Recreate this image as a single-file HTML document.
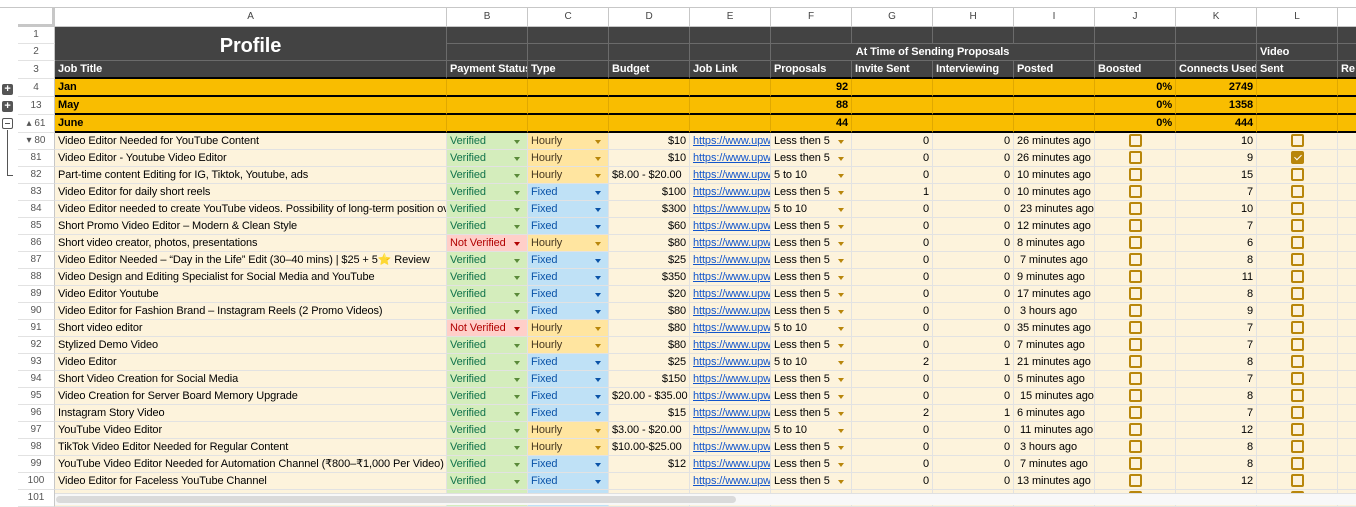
<!DOCTYPE html>
<html><head><meta charset="utf-8">
<style>
*{box-sizing:border-box}
body{margin:0;width:1356px;height:505px;overflow:hidden;background:#fff;font-family:"Liberation Sans",Arial,sans-serif;font-size:11px;color:#000;position:relative;letter-spacing:-0.1px}
.top{position:absolute;left:0;top:0;width:1356px;height:8px;border-bottom:1px solid #c7c7c7;background:#fff}
.gut{position:absolute;left:0;top:8px;width:18px;height:497px;background:#fff}
table{position:absolute;left:18px;top:8px;width:1350px;border-collapse:separate;border-spacing:0;table-layout:fixed}
td{height:17px;padding:0 3px;border-right:1px solid #e2e2e2;border-bottom:1px solid #e2e2e2;white-space:nowrap;overflow:hidden;line-height:16px;background:#fdf3dc;position:relative}
tr.ch td{height:19px;background:#fff;color:#444;font-size:10px;text-align:center;border-color:#c7c7c7}
td.rn{background:#fff;color:#555;font-size:10px;text-align:center;border-right:1px solid #c7c7c7;border-bottom:1px solid #e2e2e2;padding:0;letter-spacing:0}
td.cor{background:#f8f9fa;border-right:3px solid #c7c7c7;border-bottom:3px solid #c7c7c7}
tr.dk td:not(.rn){background:#434343;color:#fff;font-weight:bold;border-color:#6b6b6b}
tr.sm td:not(.rn){background:#f9bd00;font-weight:bold;border-bottom:2px solid #000;border-right-color:#e0a800}
tr.h3 td:not(.rn){border-bottom:2px solid #000}
.r{text-align:right}
.v{background:#d4edbc!important;color:#11734b}
.nv{background:#ffcfc9!important;color:#b10202}
.ho{background:#ffe5a0!important;color:#473821}
.fx{background:#bfe1f6!important;color:#0a53a8}
.a{position:absolute;right:7px;top:7px;width:0;height:0;border-left:3.5px solid transparent;border-right:3.5px solid transparent;border-top:4px solid #5a8a3a}
.nv .a{border-top-color:#b10202}.ho .a,.f .a{border-top-color:#b8860b}.fx .a{border-top-color:#0a53a8}
.l{color:#1155cc;text-decoration:underline}
.cb{text-align:center}
.cb i{display:inline-block;width:13px;height:13px;border:2px solid #b8860b;border-radius:2px;vertical-align:middle;margin-top:-2px}
.cb i.k{background:#b8860b;position:relative}
.cb i.k:after{content:"";position:absolute;left:3px;top:0px;width:3px;height:6px;border-right:1.5px solid #fff;border-bottom:1.5px solid #fff;transform:rotate(45deg)}
.pb{position:absolute;left:2px;width:11px;height:11px;background:#555;border-radius:2px;color:#fff;font-size:11px;line-height:10px;text-align:center;font-weight:bold}
.mb{position:absolute;left:2px;width:11px;height:11px;border:1px solid #555;border-radius:2px;background:#fff}
.mb:after{content:"";position:absolute;left:2px;top:4px;width:5px;height:1px;background:#555}
.sb{position:absolute;left:55px;top:493px;width:1301px;height:12px;background:#f8f8f8;border-top:1px solid #e0e0e0}
.sb div{position:absolute;left:1px;top:2px;width:680px;height:7px;background:#dadada;border-radius:4px}
</style></head><body>
<div class="top"></div>
<div class="gut">
<div class="pb" style="top:76px">+</div>
<div class="pb" style="top:93px">+</div>
<div class="mb" style="top:110px"></div>
<div style="position:absolute;left:7px;top:122px;width:1px;height:46px;background:#555"></div>
<div style="position:absolute;left:7px;top:167px;width:6px;height:1px;background:#555"></div>
</div>
<table>
<colgroup><col style="width:37px"><col style="width:392px"><col style="width:81px"><col style="width:81px"><col style="width:81px"><col style="width:81px"><col style="width:81px"><col style="width:81px"><col style="width:81px"><col style="width:81px"><col style="width:81px"><col style="width:81px"><col style="width:81px"><col style="width:30px"></colgroup>
<tr class="ch"><td class="cor"></td><td>A</td><td>B</td><td>C</td><td>D</td><td>E</td><td>F</td><td>G</td><td>H</td><td>I</td><td>J</td><td>K</td><td>L</td><td></td></tr>
<tr class="dk"><td class="rn">1</td><td rowspan="2" style="text-align:center;font-size:20px;line-height:20px;padding-top:4px">Profile</td><td></td><td></td><td></td><td></td><td></td><td></td><td></td><td></td><td></td><td></td><td></td><td></td></tr>
<tr class="dk"><td class="rn">2</td><td></td><td></td><td></td><td></td><td colspan="4" style="text-align:center">At Time of Sending Proposals</td><td></td><td></td><td>Video</td><td></td></tr>
<tr class="dk h3"><td class="rn">3</td><td>Job Title</td><td>Payment Status</td><td>Type</td><td>Budget</td><td>Job Link</td><td>Proposals</td><td>Invite Sent</td><td>Interviewing</td><td>Posted</td><td>Boosted</td><td>Connects Used</td><td>Sent</td><td>Re</td></tr>
<tr class="sm"><td class="rn">4</td><td>Jan</td><td></td><td></td><td></td><td></td><td class="r">92</td><td></td><td></td><td></td><td class="r">0%</td><td class="r">2749</td><td></td><td></td></tr>
<tr class="sm"><td class="rn">13</td><td>May</td><td></td><td></td><td></td><td></td><td class="r">88</td><td></td><td></td><td></td><td class="r">0%</td><td class="r">1358</td><td></td><td></td></tr>
<tr class="sm"><td class="rn">&#9652; 61</td><td>June</td><td></td><td></td><td></td><td></td><td class="r">44</td><td></td><td></td><td></td><td class="r">0%</td><td class="r">444</td><td></td><td></td></tr>
<tr><td class="rn">&#9662; 80</td><td>Video Editor Needed for YouTube Content</td><td class="v">Verified<b class="a"></b></td><td class="ho">Hourly<b class="a"></b></td><td class="r">$10</td><td class="l">https://www.upwork</td><td class="f">Less then 5<b class="a"></b></td><td class="r">0</td><td class="r">0</td><td>26 minutes ago</td><td class="cb"><i></i></td><td class="r">10</td><td class="cb"><i></i></td><td></td></tr>
<tr><td class="rn">81</td><td>Video Editor - Youtube Video Editor</td><td class="v">Verified<b class="a"></b></td><td class="ho">Hourly<b class="a"></b></td><td class="r">$10</td><td class="l">https://www.upwork</td><td class="f">Less then 5<b class="a"></b></td><td class="r">0</td><td class="r">0</td><td>26 minutes ago</td><td class="cb"><i></i></td><td class="r">9</td><td class="cb"><i class="k"></i></td><td></td></tr>
<tr><td class="rn">82</td><td>Part-time content Editing for IG, Tiktok, Youtube, ads</td><td class="v">Verified<b class="a"></b></td><td class="ho">Hourly<b class="a"></b></td><td>$8.00 - $20.00</td><td class="l">https://www.upwork</td><td class="f">5 to 10<b class="a"></b></td><td class="r">0</td><td class="r">0</td><td>10 minutes ago</td><td class="cb"><i></i></td><td class="r">15</td><td class="cb"><i></i></td><td></td></tr>
<tr><td class="rn">83</td><td>Video Editor for daily short reels</td><td class="v">Verified<b class="a"></b></td><td class="fx">Fixed<b class="a"></b></td><td class="r">$100</td><td class="l">https://www.upwork</td><td class="f">Less then 5<b class="a"></b></td><td class="r">1</td><td class="r">0</td><td>10 minutes ago</td><td class="cb"><i></i></td><td class="r">7</td><td class="cb"><i></i></td><td></td></tr>
<tr><td class="rn">84</td><td>Video Editor needed to create YouTube videos. Possibility of long-term position over</td><td class="v">Verified<b class="a"></b></td><td class="fx">Fixed<b class="a"></b></td><td class="r">$300</td><td class="l">https://www.upwork</td><td class="f">5 to 10<b class="a"></b></td><td class="r">0</td><td class="r">0</td><td>&nbsp;23 minutes ago</td><td class="cb"><i></i></td><td class="r">10</td><td class="cb"><i></i></td><td></td></tr>
<tr><td class="rn">85</td><td>Short Promo Video Editor – Modern &amp; Clean Style</td><td class="v">Verified<b class="a"></b></td><td class="fx">Fixed<b class="a"></b></td><td class="r">$60</td><td class="l">https://www.upwork</td><td class="f">Less then 5<b class="a"></b></td><td class="r">0</td><td class="r">0</td><td>12 minutes ago</td><td class="cb"><i></i></td><td class="r">7</td><td class="cb"><i></i></td><td></td></tr>
<tr><td class="rn">86</td><td>Short video creator, photos, presentations</td><td class="nv">Not Verified<b class="a"></b></td><td class="ho">Hourly<b class="a"></b></td><td class="r">$80</td><td class="l">https://www.upwork</td><td class="f">Less then 5<b class="a"></b></td><td class="r">0</td><td class="r">0</td><td>8 minutes ago</td><td class="cb"><i></i></td><td class="r">6</td><td class="cb"><i></i></td><td></td></tr>
<tr><td class="rn">87</td><td>Video Editor Needed – “Day in the Life” Edit (30–40 mins) | $25 + 5⭐ Review</td><td class="v">Verified<b class="a"></b></td><td class="fx">Fixed<b class="a"></b></td><td class="r">$25</td><td class="l">https://www.upwork</td><td class="f">Less then 5<b class="a"></b></td><td class="r">0</td><td class="r">0</td><td>&nbsp;7 minutes ago</td><td class="cb"><i></i></td><td class="r">8</td><td class="cb"><i></i></td><td></td></tr>
<tr><td class="rn">88</td><td>Video Design and Editing Specialist for Social Media and YouTube</td><td class="v">Verified<b class="a"></b></td><td class="fx">Fixed<b class="a"></b></td><td class="r">$350</td><td class="l">https://www.upwork</td><td class="f">Less then 5<b class="a"></b></td><td class="r">0</td><td class="r">0</td><td>9 minutes ago</td><td class="cb"><i></i></td><td class="r">11</td><td class="cb"><i></i></td><td></td></tr>
<tr><td class="rn">89</td><td>Video Editor Youtube</td><td class="v">Verified<b class="a"></b></td><td class="fx">Fixed<b class="a"></b></td><td class="r">$20</td><td class="l">https://www.upwork</td><td class="f">Less then 5<b class="a"></b></td><td class="r">0</td><td class="r">0</td><td>17 minutes ago</td><td class="cb"><i></i></td><td class="r">8</td><td class="cb"><i></i></td><td></td></tr>
<tr><td class="rn">90</td><td>Video Editor for Fashion Brand – Instagram Reels (2 Promo Videos)</td><td class="v">Verified<b class="a"></b></td><td class="fx">Fixed<b class="a"></b></td><td class="r">$80</td><td class="l">https://www.upwork</td><td class="f">Less then 5<b class="a"></b></td><td class="r">0</td><td class="r">0</td><td>&nbsp;3 hours ago</td><td class="cb"><i></i></td><td class="r">9</td><td class="cb"><i></i></td><td></td></tr>
<tr><td class="rn">91</td><td>Short video editor</td><td class="nv">Not Verified<b class="a"></b></td><td class="ho">Hourly<b class="a"></b></td><td class="r">$80</td><td class="l">https://www.upwork</td><td class="f">5 to 10<b class="a"></b></td><td class="r">0</td><td class="r">0</td><td>35 minutes ago</td><td class="cb"><i></i></td><td class="r">7</td><td class="cb"><i></i></td><td></td></tr>
<tr><td class="rn">92</td><td>Stylized Demo Video</td><td class="v">Verified<b class="a"></b></td><td class="ho">Hourly<b class="a"></b></td><td class="r">$80</td><td class="l">https://www.upwork</td><td class="f">Less then 5<b class="a"></b></td><td class="r">0</td><td class="r">0</td><td>7 minutes ago</td><td class="cb"><i></i></td><td class="r">7</td><td class="cb"><i></i></td><td></td></tr>
<tr><td class="rn">93</td><td>Video Editor</td><td class="v">Verified<b class="a"></b></td><td class="fx">Fixed<b class="a"></b></td><td class="r">$25</td><td class="l">https://www.upwork</td><td class="f">5 to 10<b class="a"></b></td><td class="r">2</td><td class="r">1</td><td>21 minutes ago</td><td class="cb"><i></i></td><td class="r">8</td><td class="cb"><i></i></td><td></td></tr>
<tr><td class="rn">94</td><td>Short Video Creation for Social Media</td><td class="v">Verified<b class="a"></b></td><td class="fx">Fixed<b class="a"></b></td><td class="r">$150</td><td class="l">https://www.upwork</td><td class="f">Less then 5<b class="a"></b></td><td class="r">0</td><td class="r">0</td><td>5 minutes ago</td><td class="cb"><i></i></td><td class="r">7</td><td class="cb"><i></i></td><td></td></tr>
<tr><td class="rn">95</td><td>Video Creation for Server Board Memory Upgrade</td><td class="v">Verified<b class="a"></b></td><td class="fx">Fixed<b class="a"></b></td><td>$20.00 - $35.00</td><td class="l">https://www.upwork</td><td class="f">Less then 5<b class="a"></b></td><td class="r">0</td><td class="r">0</td><td>&nbsp;15 minutes ago</td><td class="cb"><i></i></td><td class="r">8</td><td class="cb"><i></i></td><td></td></tr>
<tr><td class="rn">96</td><td>Instagram Story Video</td><td class="v">Verified<b class="a"></b></td><td class="fx">Fixed<b class="a"></b></td><td class="r">$15</td><td class="l">https://www.upwork</td><td class="f">Less then 5<b class="a"></b></td><td class="r">2</td><td class="r">1</td><td>6 minutes ago</td><td class="cb"><i></i></td><td class="r">7</td><td class="cb"><i></i></td><td></td></tr>
<tr><td class="rn">97</td><td>YouTube Video Editor</td><td class="v">Verified<b class="a"></b></td><td class="ho">Hourly<b class="a"></b></td><td>$3.00 - $20.00</td><td class="l">https://www.upwork</td><td class="f">5 to 10<b class="a"></b></td><td class="r">0</td><td class="r">0</td><td>&nbsp;11 minutes ago</td><td class="cb"><i></i></td><td class="r">12</td><td class="cb"><i></i></td><td></td></tr>
<tr><td class="rn">98</td><td>TikTok Video Editor Needed for Regular Content</td><td class="v">Verified<b class="a"></b></td><td class="ho">Hourly<b class="a"></b></td><td>$10.00-$25.00</td><td class="l">https://www.upwork</td><td class="f">Less then 5<b class="a"></b></td><td class="r">0</td><td class="r">0</td><td>&nbsp;3 hours ago</td><td class="cb"><i></i></td><td class="r">8</td><td class="cb"><i></i></td><td></td></tr>
<tr><td class="rn">99</td><td>YouTube Video Editor Needed for Automation Channel (₹800–₹1,000 Per Video)</td><td class="v">Verified<b class="a"></b></td><td class="fx">Fixed<b class="a"></b></td><td class="r">$12</td><td class="l">https://www.upwork</td><td class="f">Less then 5<b class="a"></b></td><td class="r">0</td><td class="r">0</td><td>&nbsp;7 minutes ago</td><td class="cb"><i></i></td><td class="r">8</td><td class="cb"><i></i></td><td></td></tr>
<tr><td class="rn">100</td><td>Video Editor for Faceless YouTube Channel</td><td class="v">Verified<b class="a"></b></td><td class="fx">Fixed<b class="a"></b></td><td class="r"></td><td class="l">https://www.upwork</td><td class="f">Less then 5<b class="a"></b></td><td class="r">0</td><td class="r">0</td><td>13 minutes ago</td><td class="cb"><i></i></td><td class="r">12</td><td class="cb"><i></i></td><td></td></tr>
<tr><td class="rn">101</td><td>Video Compression and Background Enhancement</td><td class="v">Verified<b class="a"></b></td><td class="fx">Fixed<b class="a"></b></td><td class="r">$30.00</td><td class="l">https://www.upwork</td><td class="f">Less then 5<b class="a"></b></td><td class="r">0</td><td class="r">0</td><td>27 minutes ago</td><td class="cb"><i></i></td><td class="r">8</td><td class="cb"><i></i></td><td></td></tr>
</table>
<div class="sb"><div></div></div>
</body></html>
